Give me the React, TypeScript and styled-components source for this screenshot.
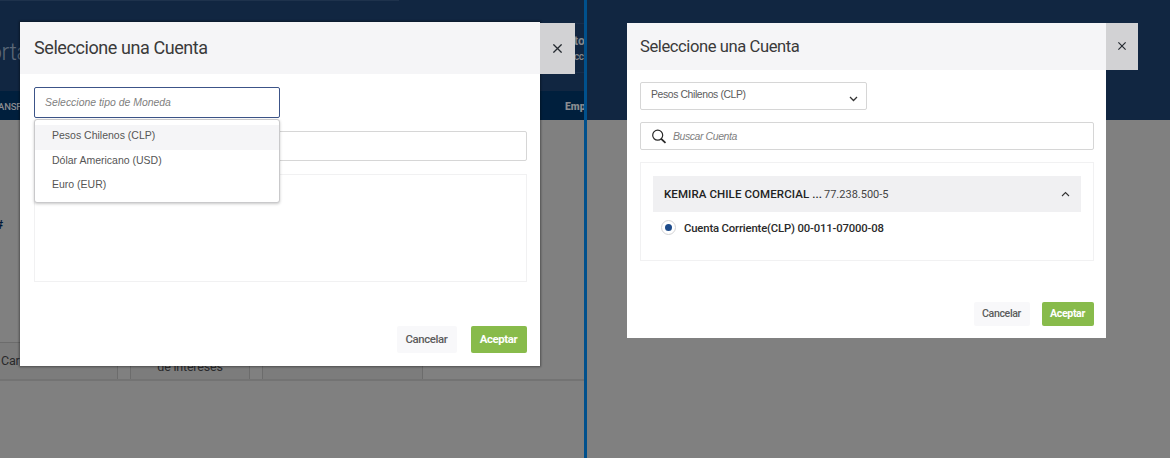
import React from 'react';
import styled, { createGlobalStyle } from 'styled-components';

const GlobalStyle = createGlobalStyle`
  * { box-sizing: border-box; }
  body { margin: 0; background: #808080; font-family: Roboto, "Liberation Sans", sans-serif; }
  button, input { font-family: inherit; }
`;

const Screen = styled.main`
  display: flex;
  width: 1170px;
  height: 458px;
  overflow: hidden;
`;

const Divider = styled.div`
  width: 3px;
  background: #00508c;
  flex: none;
`;

const Pane = styled.section<{ $width: number }>`
  position: relative;
  width: ${p => p.$width}px;
  height: 458px;
  flex: none;
  overflow: hidden;
  background: #808080;
`;

/* Dimmed page behind the dialogs */
const BrandBar = styled.div<{ $height: number }>`
  display: flex;
  justify-content: space-between;
  height: ${p => p.$height}px;
  background: #112641;
  white-space: nowrap;
`;

const TopRule = styled.div`
  width: 399px;
  height: 1px;
  background: #1e324c;
  margin-bottom: -1px;
  position: relative;
`;

const BrandName = styled.div`
  margin: 38px 0 0 -11px;
  font-size: 23px;
  line-height: 30px;
  font-weight: 300;
  letter-spacing: -0.4px;
  color: #5b6878;
`;

const UserBox = styled.div`
  width: 10px;
  height: 50px;
  margin-top: 23px;
  padding-top: 9px;
  border: solid #182d4a;
  border-width: 1px 0;
  color: #85888c;
  font-size: 12px;
  line-height: 16px;
`;

const UserName = styled.div`
  font-weight: 700;
`;

const UserMeta = styled.div`
  font-size: 10px;
  font-weight: 500;
  letter-spacing: -0.4px;
`;

const NavBar = styled.div`
  display: flex;
  justify-content: space-between;
  align-items: center;
  height: 29px;
  padding-top: 1px;
  background: #001f3d;
  color: #8a8c90;
  font-size: 9.5px;
  font-weight: 500;
  white-space: nowrap;
`;

const NavLink = styled.span<{ $strong?: boolean }>`
  width: ${p => (p.$strong ? 19 : 30)}px;
  margin-left: ${p => (p.$strong ? 0 : -2)}px;
  font-size: ${p => (p.$strong ? 10.3 : 9.5)}px;
  font-weight: ${p => (p.$strong ? 900 : 500)};
  letter-spacing: ${p => (p.$strong ? 0 : -0.15)}px;
`;

const Hash = styled.div`
  height: 222px;
  padding-top: 97px;
  margin-left: -4px;
  font-size: 12px;
  line-height: 16px;
  font-weight: 700;
  color: #001738;
`;

const CardRow = styled.div`
  display: flex;
  gap: 12px;
  height: 39px;
  border-bottom: 2px solid #737373;
  color: #29292b;
  font-size: 12.5px;
  line-height: 15px;
  letter-spacing: -0.2px;
`;

const PageCard = styled.div<{ $width: number; $first?: boolean }>`
  width: ${p => p.$width}px;
  border: 1px solid #6c6c6c;
  border-bottom: 0;
  border-left-width: ${p => (p.$first ? 0 : 1)}px;
  background: #7c7c7c;
  padding-top: ${p => (p.$first ? 10 : 16)}px;
  padding-left: ${p => (p.$first ? 1 : 0)}px;
  text-align: ${p => (p.$first ? 'left' : 'center')};
`;

/* Dialog */
const Dialog = styled.div<{ $x: number; $y: number; $w: number; $h: number; $edge?: boolean }>`
  position: absolute;
  left: ${p => p.$x}px;
  top: ${p => p.$y}px;
  width: ${p => p.$w}px;
  height: ${p => p.$h}px;
  display: flex;
  flex-direction: column;
  background: #fff;
  box-shadow: ${p => (p.$edge ? '0 0 2px 1px rgba(0,0,0,.38)' : 'none')};
`;

const DialogHeader = styled.header<{ $height: number; $pad: number }>`
  display: flex;
  align-items: center;
  flex: none;
  height: ${p => p.$height}px;
  padding-left: ${p => p.$pad}px;
  background: #f5f5f7;
`;

const Title = styled.h2<{ $size: number }>`
  margin: 0;
  font-size: ${p => p.$size}px;
  font-weight: 400;
  line-height: 24px;
  letter-spacing: -0.42px;
  color: #3a3a3a;
  white-space: nowrap;
`;

const CloseButton = styled.button<{ $top: number; $w: number; $h: number }>`
  position: absolute;
  left: 100%;
  top: ${p => p.$top}px;
  width: ${p => p.$w}px;
  height: ${p => p.$h}px;
  display: flex;
  align-items: center;
  justify-content: center;
  padding: 0 1px 1px 0;
  border: 0;
  background: #d2d2d4;
`;

const DialogBody = styled.div<{ $pad: string; $gap: number }>`
  display: flex;
  flex-direction: column;
  gap: ${p => p.$gap}px;
  padding: ${p => p.$pad};
  flex: 1;
`;

const Field = styled.div<{ $w?: number; $h: number; $focus?: boolean }>`
  position: relative;
  display: flex;
  align-items: center;
  flex: none;
  width: ${p => (p.$w ? p.$w + 'px' : '100%')};
  height: ${p => p.$h}px;
  border: 1px solid ${p => (p.$focus ? '#3c5488' : '#d6d6d6')};
  border-radius: 2px;
  background: #fff;
  color: #5c5c5c;
  font-family: "Liberation Sans", Arial, sans-serif;
  white-space: nowrap;
`;

const Placeholder = styled.span<{ $size: number; $left: number; $tight?: number }>`
  margin-left: ${p => p.$left}px;
  font-size: ${p => p.$size}px;
  letter-spacing: ${p => -(p.$tight || 0)}px;
  font-style: italic;
  color: #808080;
`;

const SelectedValue = styled.span`
  flex: 1;
  margin: -4px 0 0 10px;
  font-size: 10.4px;
  letter-spacing: -0.38px;
`;

const SelectArrow = styled.svg`
  flex: none;
  margin: 5px 8px 0 0;
`;

const SearchIcon = styled.svg`
  flex: none;
  margin-left: 10px;
`;

const Menu = styled.ul`
  position: absolute;
  z-index: 1;
  left: -1px;
  top: 31px;
  width: 246px;
  height: 84px;
  margin: 0;
  padding: 5px 0 0;
  list-style: none;
  background: #fff;
  border: 1px solid #c9c9cb;
  border-radius: 3px;
  box-shadow: 0 1px 3px rgba(0,0,0,.22);
`;

const MenuItem = styled.li<{ $active?: boolean }>`
  height: 24.5px;
  padding-left: 17px;
  font-size: 10.5px;
  line-height: 21px;
  color: #555;
  background: ${p => (p.$active ? '#f5f5f7' : 'transparent')};
`;

const ResultBox = styled.div<{ $h: number }>`
  flex: none;
  height: ${p => p.$h}px;
  padding: 13px 12px;
  border: 1px solid #f1f1f2;
`;

const AccountHeader = styled.div`
  display: flex;
  align-items: center;
  height: 36px;
  padding: 0 11px;
  background: #f0f0f2;
  font-size: 11px;
  color: #444;
  white-space: nowrap;
`;

const AccountName = styled.strong`
  font-size: 11.5px;
  letter-spacing: 0.09px;
  font-weight: 500;
  color: #222;
  margin-right: 2px;
`;

const AccountArrow = styled.svg`
  margin-left: auto;
`;

const AccountOption = styled.label`
  display: flex;
  align-items: center;
  height: 33px;
  padding-left: 8px;
  gap: 8px;
  font-size: 11.3px;
  letter-spacing: -0.15px;
  font-weight: 500;
  color: #2a2a2a;
  white-space: nowrap;
`;

const Radio = styled.span`
  display: flex;
  align-items: center;
  justify-content: center;
  width: 15px;
  height: 15px;
  margin-top: -2px;
  border: 1px solid #d3d3d5;
  border-radius: 50%;
  &::after {
    content: '';
    width: 7px;
    height: 7px;
    border-radius: 50%;
    background: #1d4b8a;
  }
`;

const Actions = styled.footer<{ $gap: number; $pad: string }>`
  display: flex;
  justify-content: flex-end;
  flex: none;
  gap: ${p => p.$gap}px;
  padding: ${p => p.$pad};
`;

const ActionButton = styled.button<{ $w: number; $h: number; $size: number; $primary?: boolean }>`
  width: ${p => p.$w}px;
  height: ${p => p.$h}px;
  padding: 0 1px 1px 0;
  border: 0;
  border-radius: 2px;
  font-size: ${p => p.$size}px;
  letter-spacing: -0.38px;
  font-weight: ${p => (p.$primary ? 700 : 500)};
  color: ${p => (p.$primary ? '#fff' : '#5c5c5c')};
  background: ${p => (p.$primary ? '#88bb4b' : '#f8f8fa')};
`;

const CloseIcon = ({ size = 9 }: { size?: number }) => (
  <svg width={size} height={size} viewBox="0 0 9 9" fill="none" stroke="#252a30" strokeWidth="1.3">
    <path d="M.4.4 8.6 8.6M8.6.4.4 8.6" />
  </svg>
);

const options = ['Pesos Chilenos (CLP)', 'Dólar Americano (USD)', 'Euro (EUR)'];

export default function App() {
  return (
    <>
      <GlobalStyle />
      <Screen>
        <Pane $width={584}>
          <TopRule />
          <BrandBar $height={91}>
            <BrandName>orta</BrandName>
            <UserBox>
              <UserName>to</UserName>
              <UserMeta>cc</UserMeta>
            </UserBox>
          </BrandBar>
          <NavBar>
            <NavLink>ANSF</NavLink>
            <NavLink $strong>Emp</NavLink>
          </NavBar>
          <Hash>#</Hash>
          <CardRow>
            <PageCard $width={118} $first>Car</PageCard>
            <PageCard $width={120}>de intereses</PageCard>
            <PageCard $width={161} />
          </CardRow>
          <Dialog $x={20} $y={22} $w={520} $h={344} $edge>
            <DialogHeader $height={52} $pad={14}>
              <Title $size={18}>Seleccione una Cuenta</Title>
            </DialogHeader>
            <CloseButton $top={1} $w={35} $h={51} aria-label="Cerrar"><CloseIcon /></CloseButton>
            <DialogBody $pad="13px 13px 0 14px" $gap={13}>
              <Field $w={246} $h={31} $focus>
                <Placeholder $size={10.45} $left={10}>Seleccione tipo de Moneda</Placeholder>
                <Menu>
                  {options.map((label, i) => (
                    <MenuItem key={label} $active={i === 0}>{label}</MenuItem>
                  ))}
                </Menu>
              </Field>
              <Field $h={30} />
              <ResultBox $h={108} />
            </DialogBody>
            <Actions $gap={14} $pad="0 13px 13px 0">
              <ActionButton $w={60} $h={27} $size={11.4}>Cancelar</ActionButton>
              <ActionButton $w={56} $h={27} $size={11.4} $primary>Aceptar</ActionButton>
            </Actions>
          </Dialog>
        </Pane>
        <Divider />
        <Pane $width={583}>
          <BrandBar $height={120} />
          <Dialog $x={40} $y={23} $w={479} $h={315}>
            <DialogHeader $height={47} $pad={13}>
              <Title $size={16.6}>Seleccione una Cuenta</Title>
            </DialogHeader>
            <CloseButton $top={0} $w={32} $h={47} aria-label="Cerrar"><CloseIcon size={8} /></CloseButton>
            <DialogBody $pad="12px 12px 0 13px" $gap={12}>
              <Field $w={227} $h={28}>
                <SelectedValue>Pesos Chilenos (CLP)</SelectedValue>
                <SelectArrow width="9" height="6" viewBox="0 0 9 6" fill="none" stroke="#333" strokeWidth="1.3">
                  <path d="M1 1 4.5 4.5 8 1" />
                </SelectArrow>
              </Field>
              <Field $h={28}>
                <SearchIcon width="16" height="15" viewBox="0 0 16 15" fill="none" stroke="#282828">
                  <circle cx="6.7" cy="6.2" r="5" strokeWidth="1.2" />
                  <path d="M10.2 9.9 14.5 13.8" strokeWidth="1.8" />
                </SearchIcon>
                <Placeholder $size={10.45} $left={6} $tight={0.4}>Buscar Cuenta</Placeholder>
              </Field>
              <ResultBox $h={99}>
                <AccountHeader>
                  <AccountName>KEMIRA CHILE COMERCIAL ...</AccountName>
                  77.238.500-5
                  <AccountArrow width="9" height="6" viewBox="0 0 9 6" fill="none" stroke="#333" strokeWidth="1.1">
                    <path d="M1 5 4.5 1.5 8 5" />
                  </AccountArrow>
                </AccountHeader>
                <AccountOption>
                  <Radio />
                  Cuenta Corriente(CLP) 00-011-07000-08
                </AccountOption>
              </ResultBox>
            </DialogBody>
            <Actions $gap={12} $pad="0 12px 12px 0">
              <ActionButton $w={56} $h={24} $size={10.6}>Cancelar</ActionButton>
              <ActionButton $w={52} $h={24} $size={10.6} $primary>Aceptar</ActionButton>
            </Actions>
          </Dialog>
        </Pane>
      </Screen>
    </>
  );
}
